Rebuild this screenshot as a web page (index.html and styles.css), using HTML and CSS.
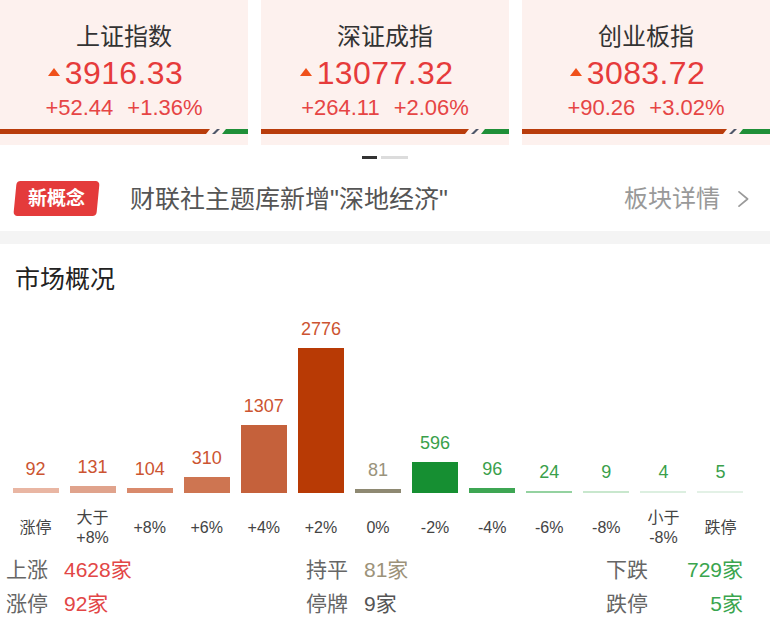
FILE: index.html
```html
<!DOCTYPE html>
<html lang="zh-CN">
<head>
<meta charset="utf-8">
<title>市场概况</title>
<link rel="stylesheet" href="styles.css">
</head>
<body>
<div class="cards">
  <div class="card">
    <div class="name">上证指数</div>
    <div class="price"><span class="num">3916.33</span></div>
    <div class="chg"><span>+52.44</span><span>+1.36%</span></div>
    <div class="ratio"><i class="up" style="width:210px"></i><i class="flat"></i><i class="down"></i></div>
  </div>
  <div class="card">
    <div class="name">深证成指</div>
    <div class="price"><span class="num">13077.32</span></div>
    <div class="chg"><span>+264.11</span><span>+2.06%</span></div>
    <div class="ratio"><i class="up" style="width:208px"></i><i class="flat"></i><i class="down"></i></div>
  </div>
  <div class="card">
    <div class="name">创业板指</div>
    <div class="price"><span class="num">3083.72</span></div>
    <div class="chg"><span>+90.26</span><span>+3.02%</span></div>
    <div class="ratio"><i class="up" style="width:205px"></i><i class="flat"></i><i class="down"></i></div>
  </div>
</div>
<div class="dots"><span class="dot on"></span><span class="dot"></span></div>

<div class="news">
  <div class="badge"><span>新概念</span></div>
  <div class="news-text">财联社主题库新增"深地经济"</div>
  <div class="more">板块详情</div>
  <svg class="chev" width="13" height="18" viewBox="0 0 13 18"><polyline points="2,1.8 10.6,9 2,16.2" fill="none" stroke="#9a9a9a" stroke-width="1.7" stroke-linecap="round" stroke-linejoin="round"/></svg>
</div>
<div class="band"></div>

<div class="sec-title">市场概况</div>
<div class="chart">
  <div class="col"><span class="val up-t">92</span><span class="bar" style="height:5px;background:#e9b6a3"></span></div>
  <div class="col"><span class="val up-t">131</span><span class="bar" style="height:7px;background:#e0a38c"></span></div>
  <div class="col"><span class="val up-t">104</span><span class="bar" style="height:5px;background:#d98a6c"></span></div>
  <div class="col"><span class="val up-t">310</span><span class="bar" style="height:16px;background:#ce7551"></span></div>
  <div class="col"><span class="val up-t">1307</span><span class="bar" style="height:68px;background:#c5613b"></span></div>
  <div class="col"><span class="val up-t">2776</span><span class="bar" style="height:145px;background:#b83a05"></span></div>
  <div class="col"><span class="val flat-t">81</span><span class="bar" style="height:4px;background:#8e8972"></span></div>
  <div class="col"><span class="val dn-t">596</span><span class="bar" style="height:31px;background:#168f32"></span></div>
  <div class="col"><span class="val dn-t">96</span><span class="bar" style="height:5px;background:#3ea653"></span></div>
  <div class="col"><span class="val dn-t">24</span><span class="bar" style="height:2px;background:#94d2a0"></span></div>
  <div class="col"><span class="val dn-t">9</span><span class="bar" style="height:2px;background:#c8e7cd"></span></div>
  <div class="col"><span class="val dn-t">4</span><span class="bar" style="height:2px;background:#dcefe0"></span></div>
  <div class="col"><span class="val dn-t">5</span><span class="bar" style="height:2px;background:#e3f1e6"></span></div>
</div>
<div class="axis">
  <div class="lbl">涨停</div>
  <div class="lbl">大于<br>+8%</div>
  <div class="lbl">+8%</div>
  <div class="lbl">+6%</div>
  <div class="lbl">+4%</div>
  <div class="lbl">+2%</div>
  <div class="lbl">0%</div>
  <div class="lbl">-2%</div>
  <div class="lbl">-4%</div>
  <div class="lbl">-6%</div>
  <div class="lbl">-8%</div>
  <div class="lbl">小于<br>-8%</div>
  <div class="lbl">跌停</div>
</div>

<div class="stats">
  <div class="stat"><span class="k">上涨</span><span class="v red">4628家</span></div>
  <div class="stat"><span class="k">持平</span><span class="v grey">81家</span></div>
  <div class="stat end"><span class="k">下跌</span><span class="v green">729家</span></div>
  <div class="stat"><span class="k">涨停</span><span class="v red">92家</span></div>
  <div class="stat"><span class="k">停牌</span><span class="v dark">9家</span></div>
  <div class="stat end"><span class="k">跌停</span><span class="v green">5家</span></div>
</div>
</body>
</html>
```

FILE: styles.css
```css
html, body {
  margin: 0;
  padding: 0;
  background: #ffffff;
}
body {
  width: 770px;
  height: 642px;
  overflow: hidden;
  font-family: "Liberation Sans", "Noto Sans CJK SC", sans-serif;
  color: #333;
}

/* index cards */
.cards {
  display: grid;
  grid-template-columns: repeat(3, 248px);
  column-gap: 13px;
}
.card {
  background: #fdf1ee;
  padding: 22px 0 11px;
  display: flex;
  flex-direction: column;
  align-items: stretch;
}
.name {
  text-align: center;
  font-size: 24px;
  line-height: 30px;
  font-weight: 400;
  color: #333;
}
.price {
  margin-top: 3px;
  text-align: center;
  font-size: 32px;
  line-height: 36px;
  color: #e63b3b;
  letter-spacing: 0.4px;
}
.num {
  position: relative;
  display: inline-block;
}
.num::before {
  content: "";
  position: absolute;
  right: 100%;
  margin-right: 5px;
  bottom: 15px;
  width: 0;
  height: 0;
  border-left: 6px solid transparent;
  border-right: 6px solid transparent;
  border-bottom: 8px solid #f0511a;
}
.chg {
  margin-top: 4px;
  display: flex;
  justify-content: center;
  gap: 14px;
  font-size: 22px;
  line-height: 26px;
  color: #e64545;
}
.ratio {
  margin-top: 8px;
  height: 5px;
  display: flex;
}
.ratio i {
  display: block;
  height: 5px;
}
.ratio .up {
  background: #b93c0b;
  clip-path: polygon(0 0, 100% 0, calc(100% - 4px) 100%, 0 100%);
}
.ratio .flat {
  width: 8px;
  margin-left: 2px;
  background: #4e5668;
  clip-path: polygon(5px 0, 100% 0, calc(100% - 5px) 100%, 0 100%);
}
.ratio .down {
  flex: 1;
  margin-left: 2px;
  background: #1f8f38;
  clip-path: polygon(4px 0, 100% 0, 100% 100%, 0 100%);
}

/* pager dots */
.dots {
  margin-top: 11px;
  display: flex;
  justify-content: center;
  gap: 4px;
  height: 3px;
}
.dot {
  display: block;
  width: 27px;
  height: 3px;
  background: #dcdcdc;
}
.dot.on {
  width: 15px;
  background: #333;
}

/* news row */
.news {
  display: flex;
  align-items: center;
  padding: 22px 20px 15px 15px;
}
.badge {
  width: 83px;
  height: 35px;
  border-radius: 4px;
  background: #e43b3b;
  transform: skewX(-5.5deg);
  display: flex;
  align-items: center;
  justify-content: center;
}
.badge span {
  transform: skewX(5.5deg);
  color: #fff;
  font-size: 19px;
  font-weight: 700;
  line-height: 35px;
}
.news-text {
  margin-left: 32px;
  font-size: 25px;
  line-height: 30px;
  color: #555;
}
.more {
  margin-left: auto;
  font-size: 24px;
  line-height: 30px;
  color: #999;
}
.chev {
  margin-left: 17px;
  display: block;
}
.band {
  height: 13px;
  background: #f4f4f4;
}

/* market overview */
.sec-title {
  margin-top: 20px;
  padding-left: 15px;
  font-size: 25px;
  line-height: 30px;
  font-weight: 400;
  color: #222;
}
.chart {
  margin: 24px 0 0 7px;
  width: 742px;
  display: grid;
  grid-template-columns: repeat(13, 1fr);
  align-items: end;
}
.col {
  display: flex;
  flex-direction: column;
  align-items: center;
}
.val {
  font-size: 18px;
  line-height: 22px;
  margin-bottom: 8px;
}
.up-t { color: #cc5431; }
.flat-t { color: #9a937c; }
.dn-t { color: #3a9f4b; }
.bar {
  display: block;
  width: 46px;
}
.axis {
  margin: 15px 0 0 7px;
  width: 742px;
  height: 40px;
  display: grid;
  grid-template-columns: repeat(13, 1fr);
  align-items: center;
}
.lbl {
  text-align: center;
  font-size: 16px;
  line-height: 20px;
  color: #444;
}

/* stats */
.stats {
  margin-top: 5px;
  padding-left: 6px;
  display: grid;
  grid-template-columns: 300px 300px 137px;
  font-size: 21px;
  line-height: 34px;
}
.stat {
  display: flex;
}
.stat .k {
  width: 58px;
  color: #666;
}
.stat.end {
  justify-content: space-between;
}
.stat.end .k {
  width: auto;
}
.red { color: #e24646; }
.grey { color: #9c9279; }
.dark { color: #555; }
.green { color: #3aa54e; }
```
